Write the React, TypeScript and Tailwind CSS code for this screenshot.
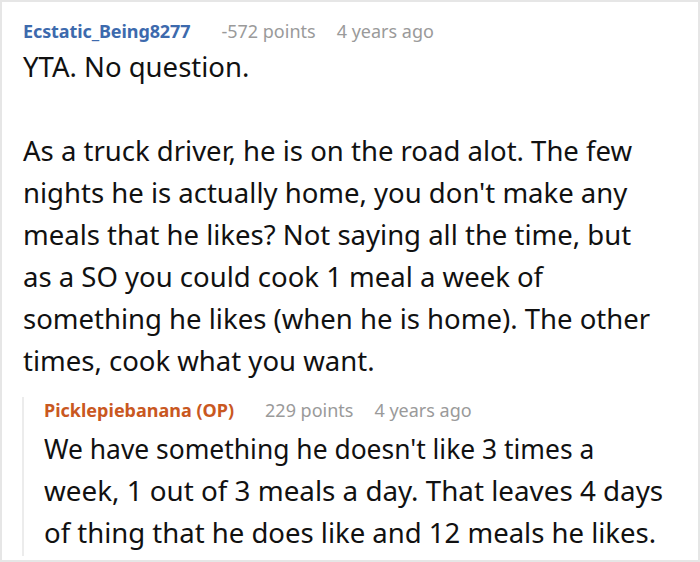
export default function App() {
  return (
    <div
      className="w-[700px] h-[562px] bg-white border-2 border-[#e6e6e6] overflow-hidden text-[#111]"
      style={{ fontFamily: '"Noto Sans", "Open Sans", sans-serif' }}
    >
      <div className="pl-[21px] pr-2 pt-[16px]">
        {/* Comment header */}
        <div className="flex items-baseline text-[18px] leading-[26px] whitespace-nowrap">
          <span className="font-bold text-[#3d6aad] tracking-[-0.1px]">Ecstatic_Being8277</span>
          <span className="ml-[31px] text-[#9a9a9a]">-572 points</span>
          <span className="ml-[21px] text-[#9a9a9a]">4 years ago</span>
        </div>

        {/* Comment body */}
        <div className="text-[27.5px] leading-[42px] mt-[2px] whitespace-nowrap">
          <p>YTA. No question.</p>
          <p className="mt-[42px]">
            As a truck driver, he is on the road alot. The few
            <br />
            nights he is actually home, you don't make any
            <br />
            meals that he likes? Not saying all the time, but
            <br />
            as a SO you could cook 1 meal a week of
            <br />
            something he likes (when he is home). The other
            <br />
            times, cook what you want.
          </p>
        </div>

        {/* Reply */}
        <div className="mt-[15px] -ml-px border-l-2 border-[#ececec] pl-[20px] pb-[2px]">
          <div className="flex items-baseline text-[18px] leading-[26px] whitespace-nowrap">
            <span className="font-bold text-[#c9581f]">Picklepiebanana (OP)</span>
            <span className="ml-[31px] text-[#9a9a9a]">229 points</span>
            <span className="ml-[21px] text-[#9a9a9a]">4 years ago</span>
          </div>
          <div className="text-[27.5px] leading-[42px] whitespace-nowrap mt-[5px]">
            <p className="origin-left scale-x-[0.96]">We have something he doesn't like 3 times a</p>
            <p className="origin-left scale-x-[1.01]">week, 1 out of 3 meals a day. That leaves 4 days</p>
            <p className="origin-left scale-x-[1.0]">of thing that he does like and 12 meals he likes.</p>
          </div>
        </div>
      </div>
    </div>
  );
}
